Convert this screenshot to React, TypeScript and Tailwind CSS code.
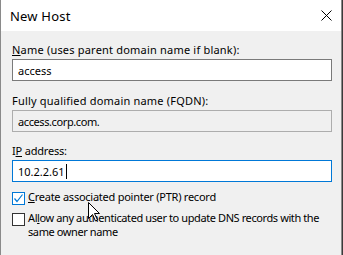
import React from "react";

const font = { fontFamily: '"Noto Sans", "Segoe UI", sans-serif' };

export default function App() {
  return (
    <div className="relative w-[343px] h-[255px] bg-[#3a3a3a] overflow-hidden text-[11px] text-black" style={font}>
      <div className="w-[342px] h-[255px] border-l border-r border-[#8a8a8a] bg-[#f0f0f0] flex flex-col">
        <div className="h-[31px] bg-white flex items-center justify-between pl-[9px] pr-[9px] shrink-0">
          <span className="text-[13px] leading-none tracking-[0.2px] mt-[1px]">New Host</span>
          <svg width="11" height="11" viewBox="0 0 11 11">
            <path d="M0.5 0.5 L10.5 10.5 M10.5 0.5 L0.5 10.5" stroke="#000" strokeWidth="1" />
          </svg>
        </div>
        <div className="flex flex-col pl-[11px] pr-[9px] pt-[11px]">
          <div className="leading-[15px] tracking-[0.2px]"><u>N</u>ame (uses parent domain name if blank):</div>
          <div className="mt-[2px] h-[22px] border border-[#7a7a7a] bg-white flex items-center pl-[5px] leading-none">access</div>
          <div className="mt-[12px] leading-[15px] tracking-[0.2px]">Fully qualified domain name (FQDN):</div>
          <div className="mt-[2px] h-[22px] border border-[#adadad] bg-[#f0f0f0] flex items-center pl-[5px] leading-none tracking-[-0.4px]">access.corp.com.</div>
          <div className="mt-[11px] leading-[15px] tracking-[-0.2px]">I<u>P</u> address:</div>
          <div className="mt-[2px] h-[22px] border border-[#0078d7] bg-white flex items-center pl-[5px] leading-none">
            10.2.2.61<span className="inline-block w-[1px] h-[15px] bg-black ml-[1px]" />
          </div>
          <div className="mt-[7px] flex items-start gap-[3px]">
            <div className="w-[13px] h-[13px] border border-[#0078d7] bg-white mt-[3px] shrink-0 flex items-center justify-center">
              <svg width="11" height="11" viewBox="0 0 11 11">
                <path d="M1.5 5.5 L4 8.5 L9.5 1.5" stroke="#0078d7" strokeWidth="1.2" fill="none" />
              </svg>
            </div>
            <div className="leading-[15px] tracking-[-0.25px]"><u>C</u>reate associated pointer (PTR) record</div>
          </div>
          <div className="mt-[6px] flex items-start gap-[3px]">
            <div className="w-[13px] h-[13px] border border-[#333] bg-white mt-[2px] shrink-0" />
            <div className="leading-[14px] whitespace-nowrap tracking-[-0.4px]">
              Al<u>l</u>ow any authenticated user to update DNS records with the
              <br />
              same owner name
            </div>
          </div>
        </div>
      </div>
      <svg className="absolute left-[88px] top-[202px]" width="13" height="20" viewBox="0 0 13 20">
        <path d="M0.5 0.5 L0.5 16.5 L4.5 12.5 L7.5 19 L9.5 18 L6.5 11.5 L11.5 11.5 Z" fill="#fff" stroke="#000" strokeWidth="1" strokeLinejoin="miter" />
      </svg>
    </div>
  );
}
